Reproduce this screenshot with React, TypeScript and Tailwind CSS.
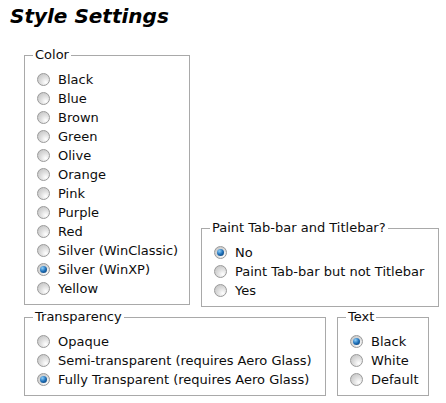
import React from 'react';

type Opt = { label: string; checked?: boolean };

const colors: Opt[] = [
  { label: 'Black' },
  { label: 'Blue' },
  { label: 'Brown' },
  { label: 'Green' },
  { label: 'Olive' },
  { label: 'Orange' },
  { label: 'Pink' },
  { label: 'Purple' },
  { label: 'Red' },
  { label: 'Silver (WinClassic)' },
  { label: 'Silver (WinXP)', checked: true },
  { label: 'Yellow' },
];

const paint: Opt[] = [
  { label: 'No', checked: true },
  { label: 'Paint Tab-bar but not Titlebar' },
  { label: 'Yes' },
];

const transparency: Opt[] = [
  { label: 'Opaque' },
  { label: 'Semi-transparent (requires Aero Glass)' },
  { label: 'Fully Transparent (requires Aero Glass)', checked: true },
];

const textOpts: Opt[] = [{ label: 'Black', checked: true }, { label: 'White' }, { label: 'Default' }];

function Radio({ checked }: { checked?: boolean }) {
  return (
    <span className="flex h-[13px] w-[13px] shrink-0 items-center justify-center rounded-full border border-[#9a9a9a] bg-[radial-gradient(circle_at_70%_75%,#ffffff,#dedede_45%,#bdbdbd)]">
      {checked && (
        <span className="h-[7px] w-[7px] rounded-full bg-[radial-gradient(circle_at_35%_30%,#8fd0fa,#1e6fb8_50%,#0a3562)]" />
      )}
    </span>
  );
}

function Group({ title, items, className }: { title: string; items: Opt[]; className?: string }) {
  return (
    <fieldset className={`border border-[#a9a9a9] pl-[8px] pt-[7px] pb-[6px] ${className ?? ''}`}>
      <legend className="px-[2px] leading-[16px]">{title}</legend>
      {items.map((o) => (
        <label key={o.label} className="flex h-[19px] items-center gap-[8px] pl-[4px] whitespace-nowrap">
          <Radio checked={o.checked} />
          <span>{o.label}</span>
        </label>
      ))}
    </fieldset>
  );
}

export default function App() {
  return (
    <div className="min-h-[403px] w-[446px] bg-white pt-[4px] text-[13px] text-[#0d0d0d] [font-family:'DejaVu_Sans',Verdana,sans-serif]">
      <h1 className="pl-[10px] text-[20px] leading-[24px] font-bold italic text-black">Style Settings</h1>
      <div className="mt-[19px] flex items-end gap-[11px] pl-[24px]">
        <Group title="Color" items={colors} className="w-[166px]" />
        <Group title="Paint Tab-bar and Titlebar?" items={paint} className="-mb-[2px] w-[238px]" />
      </div>
      <div className="mt-[4px] flex items-start gap-[11px] pl-[24px]">
        <Group title="Transparency" items={transparency} className="w-[302px]" />
        <Group title="Text" items={textOpts} className="w-[92px]" />
      </div>
    </div>
  );
}
